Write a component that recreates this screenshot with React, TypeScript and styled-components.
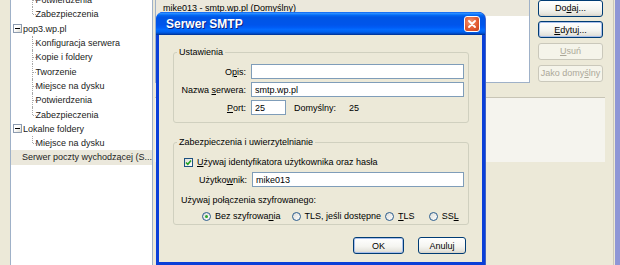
import React from 'react'
import styled, { createGlobalStyle, css } from 'styled-components'

const Global = createGlobalStyle`
  html, body { margin: 0; padding: 0; }
  body {
    font-family: "Liberation Sans", Arial, sans-serif;
    font-size: 9px;
    color: #000;
  }
`

const Screen = styled.div`
  position: relative;
  width: 620px;
  height: 265px;
  overflow: hidden;
  background: #ece9d8;
  display: flex;
  padding-left: 10px;
  box-sizing: border-box;
`

/* ---------- account tree ---------- */

const TreePanel = styled.div`
  width: 143px;
  flex: none;
  box-sizing: border-box;
  background: #fff;
  border-left: 1px solid #9fb1c8;
  border-right: 1px solid #9fb1c8;
  overflow: hidden;
`

const TreeList = styled.div`
  margin-top: -7px;
`

const TreeRow = styled.div<{ $level: number; $selected?: boolean; $expander?: boolean }>`
  height: 14.3px;
  display: flex;
  align-items: center;
  white-space: nowrap;
  padding-left: ${p => (p.$level ? 21 : p.$expander ? 2 : 11)}px;
  background: ${p => (p.$selected ? '#ebe8dc' : 'transparent')};
  color: #222;
`

const Expander = styled.span`
  width: 9px;
  height: 9px;
  box-sizing: border-box;
  border: 1px solid #8d9cb0;
  background: linear-gradient(135deg, #fff 40%, #dcdad0);
  margin-right: 1px;
  display: flex;
  align-items: center;
  justify-content: center;
  &::after {
    content: '';
    width: 5px;
    border-top: 1px solid #000;
  }
`

const Connector = styled.span<{ $last?: boolean }>`
  position: relative;
  align-self: stretch;
  width: 3px;
  margin-right: 0.5px;
  &::before {
    content: '';
    position: absolute;
    left: 0;
    top: 0;
    height: ${p => (p.$last ? '50%' : '100%')};
    border-left: 1px dotted #a8a8a8;
  }
  &::after {
    content: '';
    position: absolute;
    left: 1px;
    top: 50%;
    width: 3px;
    border-top: 1px dotted #a8a8a8;
  }
`

/* ---------- right side of the settings window ---------- */

const RightArea = styled.div`
  flex: 1;
  display: flex;
  flex-direction: column;
  padding-left: 2px;
`

const TopRow = styled.div`
  display: flex;
  margin-top: -1px;
`

const AccountList = styled.div`
  width: 375px;
  height: 84px;
  box-sizing: border-box;
  background: #fff;
  border: 1px solid #9fb1c8;
`

const AccountRow = styled.div`
  height: 16px;
  display: flex;
  align-items: center;
  padding-left: 7px;
  background: #ebe8dc;
`

const ButtonColumn = styled.div`
  margin-left: 8px;
  width: 65px;
  display: flex;
  flex-direction: column;
  gap: 4.7px;
  margin-top: 0.5px;
`

const XpButton = styled.button<{ $default?: boolean; $w?: number }>`
  height: 17px;
  width: ${p => (p.$w ? `${p.$w}px` : '100%')};
  padding: 0;
  font: inherit;
  color: #000;
  white-space: nowrap;
  border: 1px solid #003c74;
  border-radius: 3px;
  background: linear-gradient(180deg, #fff 0%, #f5f5f1 55%, #e6e5de 85%, #d8d3c8 100%);
  ${p =>
    p.$default &&
    css`
      box-shadow: inset 0 0 0 1px #a9bfeb;
    `}
  &:disabled {
    border-color: #cac8bb;
    background: #f5f4ea;
    color: #aca899;
  }
`

const Separator = styled.div`
  margin-top: 14px;
  margin-right: 7px;
  border-top: 1px solid #c8c5b6;
`

const InfoPanel = styled.div`
  height: 64px;
  margin-right: 7px;
  background: #f5f4ee;
`

const WindowEdge = styled.div`
  width: 8px;
  flex: none;
  background: linear-gradient(90deg, #ece9d8 0 1px, #cbc8ba 1px 2px, #ece9d8 2px 3px, #8f97d6 3px);
`

/* ---------- SMTP dialog ---------- */

const Dialog = styled.div`
  position: absolute;
  left: 156px;
  top: 12px;
  width: 329px;
  height: 253px;
  box-sizing: border-box;
  border-radius: 7px 7px 0 0;
  background: #0a3fd8;
  padding: 0 3px 3px;
  display: flex;
  flex-direction: column;
  box-shadow: 1px 0 0 #3d62c9;
`

const TitleBar = styled.div`
  height: 23px;
  margin: 0 -3px;
  padding: 0 5px 0 10px;
  border-radius: 7px 7px 0 0;
  display: flex;
  align-items: center;
  justify-content: space-between;
  background: linear-gradient(
    180deg,
    #0058ee 0%,
    #3593ff 5%,
    #127dff 10%,
    #0262ee 16%,
    #0055e5 24%,
    #0055eb 56%,
    #005bf5 66%,
    #026afe 76%,
    #0062ef 86%,
    #0052d6 92%,
    #0040ab 96%,
    #003092 100%
  );
`

const Title = styled.span`
  color: #fff;
  font-weight: bold;
  font-size: 12px;
  text-shadow: 1px 1px 0 #0a1f80;
`

const CloseButton = styled.span`
  width: 16px;
  height: 16px;
  box-sizing: border-box;
  border: 1px solid #fff;
  border-radius: 3px;
  background: radial-gradient(circle at 40% 35%, #f09a78 0%, #e35b32 55%, #c4401c 100%);
  display: flex;
  align-items: center;
  justify-content: center;
`

const DialogBody = styled.div`
  flex: 1;
  background: #ece9d8;
  padding: 12px 13px 0 14px;
  display: flex;
  flex-direction: column;
  white-space: nowrap;
`

const GroupBox = styled.fieldset<{ $pb?: number }>`
  margin: 0;
  padding: 0 4px ${p => p.$pb ?? 7}px 0;
  border: 1px solid #d0d0bf;
  border-radius: 3px;
  min-width: 0;
  & + & {
    margin-top: 14px;
  }
`

const Legend = styled.legend`
  margin-left: 3px;
  padding: 0 2px;
  line-height: 11px;
  color: #000;
`

const FormGrid = styled.div`
  margin-top: 6px;
  display: grid;
  grid-template-columns: 72px 1fr;
  column-gap: 5px;
  row-gap: 3px;
  align-items: center;
`

const FieldLabel = styled.label`
  text-align: right;
`

const TextBox = styled.input<{ $w?: number }>`
  box-sizing: border-box;
  height: 15px;
  width: ${p => (p.$w ? `${p.$w}px` : '100%')};
  border: 1px solid #7f9db9;
  background: #fff;
  padding: 0 3px;
  font: inherit;
  color: #000;
  outline: none;
`

const PortLine = styled.div`
  display: flex;
  align-items: center;
`

const DefaultPort = styled.span`
  margin-left: 8px;
  display: flex;
  gap: 13px;
`

const CheckLine = styled.label`
  margin: 9px 0 0 10px;
  display: flex;
  align-items: center;
  gap: 4px;
`

const CheckBox = styled.span`
  width: 9px;
  height: 9px;
  box-sizing: border-box;
  border: 1px solid #1c5180;
  background: linear-gradient(135deg, #dcdcd7, #fff);
  display: flex;
  align-items: center;
  justify-content: center;
`

const UserLine = styled.div`
  margin: 5px 0 0 25px;
  display: flex;
  align-items: center;
  gap: 5px;
`

const Hint = styled.div`
  margin: 8px 0 0 7px;
`

const RadioRow = styled.div`
  margin: 6px 0 0 28px;
  display: flex;
  align-items: center;
`

const RadioOption = styled.label<{ $gap: number }>`
  display: flex;
  align-items: center;
  gap: 4px;
  margin-right: ${p => p.$gap}px;
`

const Radio = styled.span<{ $on?: boolean }>`
  width: 9px;
  height: 9px;
  box-sizing: border-box;
  border-radius: 50%;
  border: 1px solid #2a5c8e;
  background: linear-gradient(135deg, #dcdcd7, #fff);
  display: flex;
  align-items: center;
  justify-content: center;
  &::after {
    content: '';
    width: 3px;
    height: 3px;
    border-radius: 50%;
    background: ${p => (p.$on ? '#2ba62b' : 'transparent')};
  }
`

const DialogButtons = styled.div`
  margin-top: 12px;
  padding-right: 3px;
  display: flex;
  justify-content: flex-end;
  gap: 14px;
`

const U = styled.span`
  text-decoration: underline;
`

type Node = { label: string; level: number; last?: boolean; expander?: boolean; selected?: boolean }

const tree: Node[] = [
  { label: 'Potwierdzenia', level: 1 },
  { label: 'Zabezpieczenia', level: 1, last: true },
  { label: 'pop3.wp.pl', level: 0, expander: true },
  { label: 'Konfiguracja serwera', level: 1 },
  { label: 'Kopie i foldery', level: 1 },
  { label: 'Tworzenie', level: 1 },
  { label: 'Miejsce na dysku', level: 1 },
  { label: 'Potwierdzenia', level: 1 },
  { label: 'Zabezpieczenia', level: 1, last: true },
  { label: 'Lokalne foldery', level: 0, expander: true },
  { label: 'Miejsce na dysku', level: 1, last: true },
  { label: 'Serwer poczty wychodzącej (S...', level: 0, selected: true },
]

const radios = [
  { key: 'none', label: <>Bez szyfrowa<U>n</U>ia</>, on: true, gap: 11 },
  { key: 'tls-opt', label: <>TLS, jeśli dostępne</>, gap: 4 },
  { key: 'tls', label: <><U>T</U>LS</>, gap: 14 },
  { key: 'ssl', label: <>SS<U>L</U></>, gap: 0 },
]

export default function App() {
  return (
    <>
      <Global />
      <Screen>
        <TreePanel>
          <TreeList>
            {tree.map((n, i) => (
              <TreeRow key={i} $level={n.level} $selected={n.selected} $expander={n.expander}>
                {n.expander && <Expander />}
                {n.level > 0 && <Connector $last={n.last} />}
                {n.label}
              </TreeRow>
            ))}
          </TreeList>
        </TreePanel>

        <RightArea>
          <TopRow>
            <AccountList>
              <AccountRow>mike013 - smtp.wp.pl (Domyślny)</AccountRow>
            </AccountList>
            <ButtonColumn>
              <XpButton>Do<U>d</U>aj...</XpButton>
              <XpButton $default><U>E</U>dytuj...</XpButton>
              <XpButton disabled><U>U</U>suń</XpButton>
              <XpButton disabled>Jako domy<U>ś</U>lny</XpButton>
            </ButtonColumn>
          </TopRow>
          <Separator />
          <InfoPanel />
        </RightArea>

        <WindowEdge />

        <Dialog>
          <TitleBar>
            <Title>Serwer SMTP</Title>
            <CloseButton>
              <svg width="8" height="8" viewBox="0 0 8 8">
                <path d="M1 1 L7 7 M7 1 L1 7" stroke="#fff" strokeWidth="1.8" strokeLinecap="round" />
              </svg>
            </CloseButton>
          </TitleBar>
          <DialogBody>
            <GroupBox>
              <Legend>Ustawienia</Legend>
              <FormGrid>
                <FieldLabel>O<U>p</U>is:</FieldLabel>
                <TextBox readOnly defaultValue="" />
                <FieldLabel>Nazwa <U>s</U>erwera:</FieldLabel>
                <TextBox readOnly defaultValue="smtp.wp.pl" />
                <FieldLabel><U>P</U>ort:</FieldLabel>
                <PortLine>
                  <TextBox readOnly defaultValue="25" $w={35} />
                  <DefaultPort>
                    <span>Domyślny:</span>
                    <span>25</span>
                  </DefaultPort>
                </PortLine>
              </FormGrid>
            </GroupBox>

            <GroupBox $pb={3}>
              <Legend>Zabezpieczenia i uwierzytelnianie</Legend>
              <CheckLine>
                <CheckBox>
                  <svg width="7" height="7" viewBox="0 0 7 7">
                    <path d="M1 3.5 L2.8 5.3 L6 1.5" fill="none" stroke="#21a121" strokeWidth="1.6" />
                  </svg>
                </CheckBox>
                <span><U>U</U>żywaj identyfikatora użytkownika oraz hasła</span>
              </CheckLine>
              <UserLine>
                <span>Użytko<U>w</U>nik:</span>
                <TextBox readOnly defaultValue="mike013" />
              </UserLine>
              <Hint>Używaj połączenia szyfrowanego:</Hint>
              <RadioRow>
                {radios.map(r => (
                  <RadioOption key={r.key} $gap={r.gap}>
                    <Radio $on={r.on} />
                    <span>{r.label}</span>
                  </RadioOption>
                ))}
              </RadioRow>
            </GroupBox>

            <DialogButtons>
              <XpButton $default $w={51}>OK</XpButton>
              <XpButton $w={48}>Anuluj</XpButton>
            </DialogButtons>
          </DialogBody>
        </Dialog>
      </Screen>
    </>
  )
}
